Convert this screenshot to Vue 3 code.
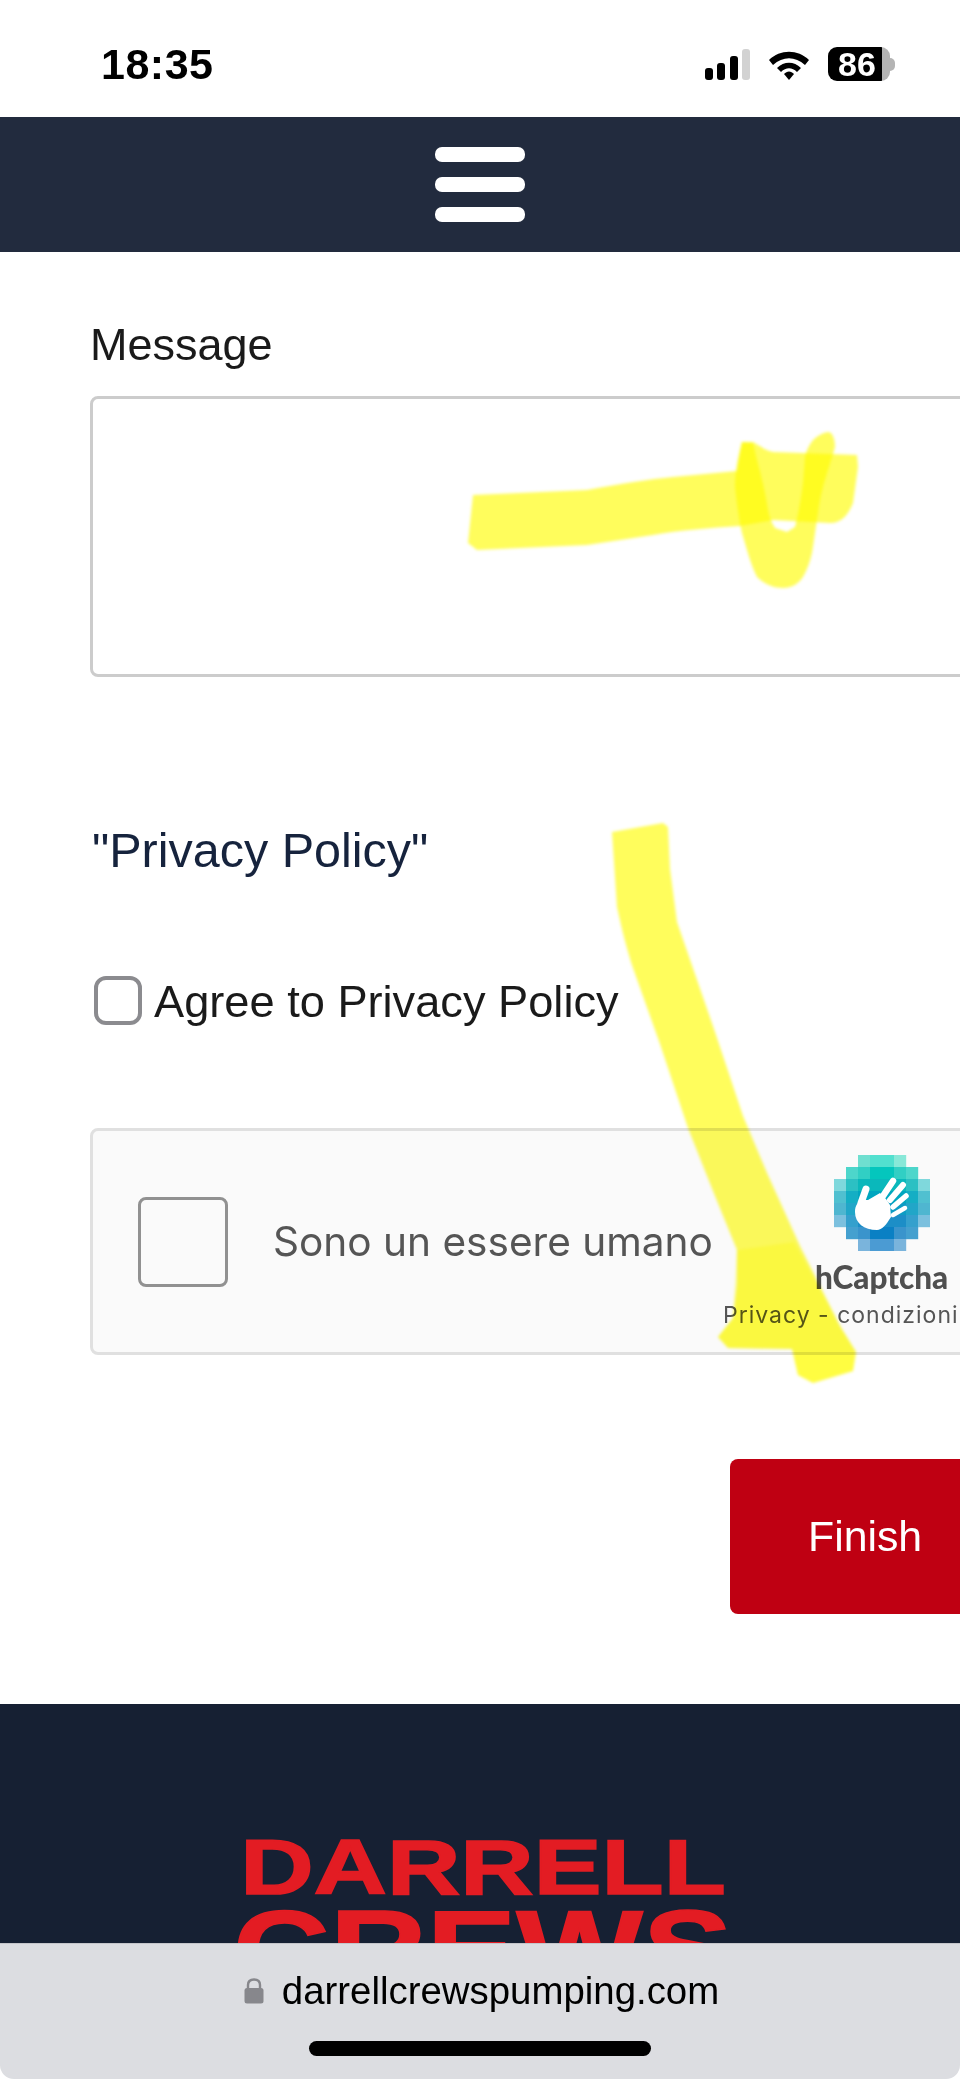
<template>
  <div class="page">
    <div class="status">
      <span class="time">18:35</span>
      <div class="status-icons">
        <div class="signal">
          <i class="s1"></i><i class="s2"></i><i class="s3"></i><i class="s4"></i>
        </div>
        <svg class="wifi" viewBox="0 0 42 31">
          <path d="M1 11 C12 0 30 0 41 11 L37 16 C27 7 15 7 5 16 Z" fill="#000" />
          <path d="M9 19 C16 12 26 12 33 19 L29 23 C24 18 18 18 13 23 Z" fill="#000" />
          <path d="M16 25 C19 21.500 23 21.500 26 25 L21 31 Z" fill="#000" />
        </svg>
        <div class="battery"><span>86</span></div>
        <div class="nub"></div>
      </div>
    </div>

    <nav class="nav">
      <span class="bar"></span><span class="bar"></span><span class="bar"></span>
    </nav>

    <main class="form">
      <label class="label">Message</label>
      <textarea class="message"></textarea>

      <h2 class="policy">"Privacy Policy"</h2>

      <label class="agree">
        <input type="checkbox" class="check" />
        <span class="agree-text">Agree to Privacy Policy</span>
      </label>

      <div class="captcha">
        <div class="cap-box"></div>
        <span class="cap-text">Sono un essere umano</span>
        <div class="cap-brand">
          <svg class="cap-logo" viewBox="0 0 96 96">
            <rect v-for="c in cells" :key="c.key" :x="c.x" :y="c.y" width="12.2" height="12.2" :fill="c.fill" />
            <path d="M21 57 C21 50 24 47 28 45 L34 45 L46 38 L52 44 L56 50 L57 62 C52 70 48 75 43 75 C30 75 21 68 21 57 Z" fill="#fff" />
            <g stroke="#fff" stroke-linecap="round" fill="none">
              <path d="M27 48 L32 34" stroke-width="7" />
              <path d="M49 41 L59 26" stroke-width="6.500" />
              <path d="M56 45 L69 30" stroke-width="6" />
              <path d="M59 52 L72 41" stroke-width="5.500" />
              <path d="M59 60 L71 53" stroke-width="4.500" />
            </g>
          </svg>
          <span class="cap-name">hCaptcha</span>
          <span class="cap-links">Privacy - condizioni</span>
        </div>
      </div>

      <div class="actions">
        <button class="finish">Finish</button>
      </div>
    </main>

    <footer class="footer">
      <div class="logo">
        <span class="logo-top">DARRELL</span>
        <span class="logo-bottom">CREWS</span>
      </div>
    </footer>

    <svg class="marker" viewBox="0 0 960 2079">
      <g fill="#fffc00" fill-opacity="0.64">
        <path d="M473 495 L587 490 C620 484 650 479 673 477 L737 471 L742 442 L753 442 C760 446 765 450 773 452 L857 455 L858 467 L853 503 C848 515 842 523 830 523 L773 520 L740 526 C710 528 680 530 653 535 L587 545 L477 550 L468 543 Z" />
        <path d="M742 442 C737 460 735 475 735 487 C737 505 739 520 742 533 C747 550 751 565 757 577 C765 585 775 588 783 588 C792 588 798 584 803 577 C807 570 810 562 812 553 C815 535 817 517 820 500 C824 480 830 465 835 447 C835 438 832 432 828 432 C822 433 817 436 813 440 C809 445 806 451 805 457 L803 483 C801 500 798 515 795 527 L787 532 L775 528 C771 522 769 516 768 510 C765 490 761 475 757 460 L753 443 Z" />
        <path d="M612 832 L617 907 C622 930 627 950 633 968 L660 1044 L688 1128 L715 1196 L737 1250 L737 1284 L733 1318 L718 1337 L728 1348 L792 1349 L798 1375 L813 1383 L853 1371 L856 1352 L840 1326 L800 1246 L767 1173 L743 1116 L715 1032 L677 922 L670 869 L668 827 L663 823 Z" />
      </g>
      <path d="M737 1250 L794 1242 L840 1326 L856 1352 L853 1371 L813 1383 L798 1375 L792 1349 L728 1348 L718 1337 L733 1318 Z" fill="#fffc00" fill-opacity="0.3" />
    </svg>

    <div class="browser">
      <div class="url">
        <svg class="lock" viewBox="0 0 20 26">
          <path d="M4 12 V7 C4 3 7 1.500 10 1.500 C13 1.500 16 3 16 7 V12" fill="none" stroke="#87878c" stroke-width="2.400" />
          <rect x="0.500" y="10" width="19" height="15.500" rx="2.500" fill="#87878c" />
        </svg>
        <span>darrellcrewspumping.com</span>
      </div>
      <div class="home"></div>
    </div>
  </div>
</template>

<script setup>
const rows = [
  [null, null, '#6fdfd0', '#52e0cf', '#52e0cf', '#88e8d8', null, null],
  [null, '#4dd6cb', '#31cfc4', '#04c6bd', '#04c6bd', '#31cfc4', '#4dd6cb', null],
  ['#7fd8dc', '#2cc0c3', '#0ab8bb', '#0ab8bb', '#0ab8bb', '#0ab8bb', '#2cc0c3', '#7fd8dc'],
  ['#50c0d0', '#14aec4', '#00a6bf', '#00a6bf', '#00a6bf', '#00a6bf', '#14aec4', '#50c0d0'],
  ['#4fb6d0', '#21a6c8', '#0d9cc4', '#0d9cc4', '#0d9cc4', '#0d9cc4', '#21a6c8', '#4fb6d0'],
  ['#7cc0de', '#35a0cd', '#1c8ec7', '#1c8ec7', '#1c8ec7', '#1c8ec7', '#35a0cd', '#7cc0de'],
  [null, '#45a0cf', '#3a94cc', '#0a80c4', '#0a80c4', '#3a94cc', '#45a0cf', null],
  [null, null, '#7ab4dc', '#4b9bd3', '#4b9bd3', '#7ab4dc', null, null]
]

const cells = rows.flatMap((row, y) =>
  row.map((fill, x) => ({ key: x + '-' + y, x: x * 12, y: y * 12, fill })).filter(c => c.fill)
)
</script>

<style>
html, body { margin: 0; background: #fff; }
</style>

<style scoped>
.page {
  position: relative;
  width: 960px;
  height: 2079px;
  overflow: hidden;
  background: #fff;
  font-family: "Liberation Sans", Arial, sans-serif;
  color: #1a1a1a;
}
.status {
  height: 117px;
  display: flex;
  align-items: center;
  justify-content: space-between;
  box-sizing: border-box;
  padding: 11px 65px 0 101px;
}
.time {
  font-size: 43px;
  font-weight: 700;
  color: #000;
  letter-spacing: 0.5px;
}
.status-icons {
  display: flex;
  align-items: center;
}
.signal {
  display: flex;
  align-items: flex-end;
  gap: 4.500px;
  height: 31px;
  margin-right: 18px;
}
.signal i {
  display: block;
  width: 8px;
  border-radius: 3px;
  background: #000;
}
.s1 { height: 12px; }
.s2 { height: 17px; }
.s3 { height: 24px; }
.signal .s4 { height: 31px; background: #d2d2d2; }
.wifi {
  width: 42px;
  height: 31px;
  margin-right: 18px;
}
.battery {
  width: 62px;
  height: 34px;
  border-radius: 9px;
  background: linear-gradient(90deg, #000 87%, #b4b4b4 87%);
  display: flex;
  align-items: center;
  padding-left: 10px;
  box-sizing: border-box;
  color: #fff;
  font-size: 34px;
  font-weight: 700;
}
.nub {
  width: 5px;
  height: 13px;
  border-radius: 0 6px 6px 0;
  background: #b4b4b4;
}
.nav {
  height: 135px;
  background: #222b3e;
  display: flex;
  flex-direction: column;
  align-items: center;
  justify-content: center;
  gap: 15px;
}
.bar {
  width: 90px;
  height: 15px;
  border-radius: 7px;
  background: #fff;
}
.form {
  padding: 67px 0 0 90px;
}
.label {
  display: block;
  font-size: 45px;
  line-height: 52px;
  color: #1a1a1a;
}
.message {
  display: block;
  width: 1000px;
  height: 281px;
  margin: 25px 0 0;
  box-sizing: border-box;
  border: 3px solid #ccc;
  border-radius: 8px;
  background: #fff;
  resize: none;
  outline: none;
}
.policy {
  margin: 147px 0 0 2px;
  font-size: 48.500px;
  line-height: 52px;
  font-weight: 400;
  color: #16233d;
}
.agree {
  display: flex;
  align-items: center;
  gap: 12px;
  height: 50px;
  margin: 99px 0 0 4px;
  font-size: 45.200px;
}
.agree-text {
  padding-top: 4px;
}
.check {
  appearance: none;
  margin: 0;
  width: 48px;
  height: 49px;
  box-sizing: border-box;
  border: 4px solid #8b8b8f;
  border-radius: 12px;
  background: #fff;
}
.captcha {
  display: flex;
  align-items: center;
  width: 960px;
  height: 227px;
  margin-top: 103px;
  box-sizing: border-box;
  border: 3px solid #e0e0e0;
  border-radius: 8px;
  background: #fafafa;
  padding-left: 45px;
  position: relative;
}
.cap-box {
  width: 90px;
  height: 90px;
  box-sizing: border-box;
  border: 3px solid #919191;
  border-radius: 8px;
  background: #fafafa;
  flex: none;
}
.cap-text {
  margin-left: 45px;
  font-family: Inter, "Liberation Sans", sans-serif;
  font-size: 40.600px;
  color: #555;
  white-space: nowrap;
}
.cap-brand {
  position: absolute;
  left: 630px;
  top: 24px;
  width: 230px;
  display: flex;
  flex-direction: column;
  align-items: flex-start;
}
.cap-logo {
  width: 96px;
  height: 96px;
  margin-left: 111px;
}
.cap-name {
  margin: 10px 0 0 92px;
  font-family: Lato, "Liberation Sans", sans-serif;
  font-size: 31.500px;
  line-height: 32px;
  font-weight: 900;
  color: #4f4f4f;
  white-space: nowrap;
}
.cap-links {
  margin-top: 8px;
  font-family: Inter, "Liberation Sans", sans-serif;
  font-size: 23px;
  line-height: 28px;
  letter-spacing: 1px;
  color: #555;
  white-space: nowrap;
}
.actions {
  margin-top: 104px;
  padding-left: 640px;
}
.finish {
  display: block;
  width: 300px;
  height: 155px;
  border: none;
  border-radius: 8px;
  background: #bf0012;
  color: #fff;
  font-family: "Liberation Sans", Arial, sans-serif;
  font-size: 42.800px;
  text-align: left;
  padding: 0 0 0 78px;
}
.footer {
  height: 239px;
  margin-top: 90px;
  background: #162033;
  padding-top: 135px;
  box-sizing: border-box;
  overflow: hidden;
}
.logo {
  display: flex;
  flex-direction: column;
  align-items: center;
  gap: 14px;
  color: #e31c23;
  font-weight: 700;
  -webkit-text-stroke: 1.500px #e31c23;
  padding-left: 5px;
}
.logo-top {
  display: block;
  font-size: 77px;
  line-height: 56px;
  transform: scaleX(1.32);
}
.logo-bottom {
  display: block;
  font-size: 110px;
  line-height: 80px;
  transform: scaleX(1.22);
}
.marker {
  position: absolute;
  left: 0;
  top: 0;
  width: 960px;
  height: 2079px;
  mix-blend-mode: multiply;
  filter: blur(1.500px);
  pointer-events: none;
}
.browser {
  position: absolute;
  left: 0;
  right: 0;
  bottom: 0;
  height: 136px;
  box-sizing: border-box;
  border-top: 1px solid #c4c5ca;
  border-radius: 0 0 14px 14px;
  background: #dcdde1;
  display: flex;
  flex-direction: column;
  align-items: center;
}
.url {
  display: flex;
  align-items: center;
  gap: 18px;
  margin-top: 24px;
  height: 46px;
  font-size: 38.400px;
  color: #000;
  padding-left: 3px;
}
.lock {
  width: 20px;
  height: 26px;
}
.home {
  width: 342px;
  height: 15px;
  margin-top: 27px;
  border-radius: 8px;
  background: #000;
}
</style>
